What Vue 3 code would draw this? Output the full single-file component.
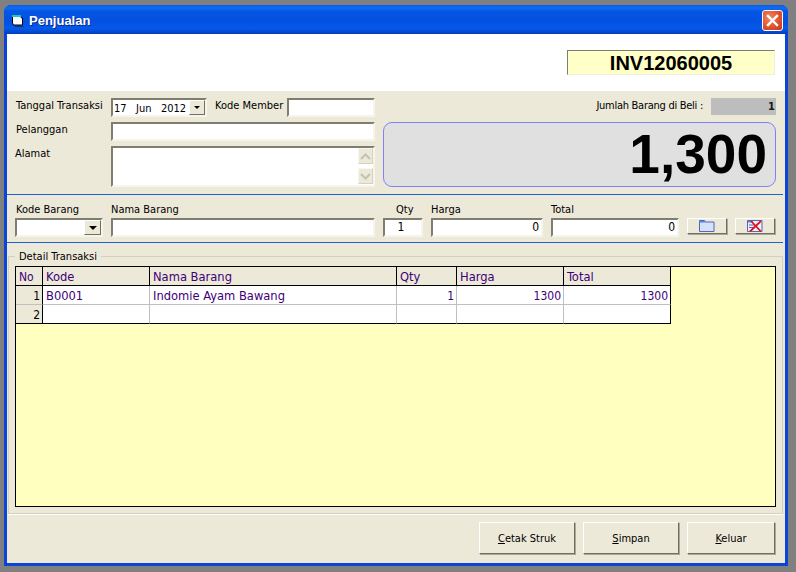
<script setup>
const columns = [
  { name: 'Kode', w: 107 },
  { name: 'Nama Barang', w: 247 },
  { name: 'Qty', w: 60 },
  { name: 'Harga', w: 107 },
  { name: 'Total', w: 107 }
]
const rows = [
  { no: 1, kode: 'B0001', nama: 'Indomie Ayam Bawang', qty: '1', harga: '1300', total: '1300' },
  { no: 2, kode: '', nama: '', qty: '', harga: '', total: '' }
]
</script>

<template>
  <div class="window">
    <header class="titlebar">
      <svg class="app-icon" width="14" height="14" viewBox="0 0 14 14">
        <path d="M1.500 2.500h8l1 1.500h1v7h-9l-1-2z" fill="#fff" stroke="#000"/>
        <path d="M1 2h9" stroke="#1fc7b8" stroke-width="2"/>
        <path d="M4 12h9v1H4z" fill="#16345c"/>
      </svg>
      <span class="title">Penjualan</span>
      <button class="close" aria-label="Tutup">
        <svg width="13" height="13" viewBox="0 0 13 13"><path d="M2 2l9 9M11 2l-9 9" stroke="#fff" stroke-width="2.400" stroke-linecap="square"/></svg>
      </button>
    </header>

    <main class="client">
      <section class="banner">
        <div class="invoice">INV12060005</div>
      </section>

      <section class="summary">
        <div class="customer">
          <div class="row row-first">
            <label class="lbl lbl-wide">Tanggal Transaksi</label>
            <div class="sunken date">
              <span class="date-text">17&nbsp;&nbsp; Jun&nbsp;&nbsp; 2012</span>
              <span class="drop small"><i class="arrow tiny"></i></span>
            </div>
            <label class="lbl lbl-member">Kode Member</label>
            <div class="sunken member"></div>
          </div>
          <div class="row row-second">
            <label class="lbl lbl-wide">Pelanggan</label>
            <div class="sunken grow"></div>
          </div>
          <div class="row row-third">
            <label class="lbl lbl-wide lbl-flush">Alamat</label>
            <div class="sunken grow memo">
              <div class="scroll">
                <span class="scroll-btn"><svg width="11" height="7" viewBox="0 0 11 7"><path d="M1 6l4.500-4.500L10 6" fill="none" stroke="#c4c2b4" stroke-width="2"/></svg></span>
                <span class="scroll-btn"><svg width="11" height="7" viewBox="0 0 11 7"><path d="M1 1l4.500 4.500L10 1" fill="none" stroke="#c4c2b4" stroke-width="2"/></svg></span>
              </div>
            </div>
          </div>
        </div>

        <div class="totals">
          <div class="count">
            <span class="lbl count-lbl">Jumlah Barang di Beli :</span>
            <span class="count-box">1</span>
          </div>
          <div class="grand">1,300</div>
        </div>
      </section>

      <section class="entry">
        <div class="field f-kode">
          <label class="lbl">Kode Barang</label>
          <div class="sunken combo"><span class="drop"><i class="arrow"></i></span></div>
        </div>
        <div class="field f-nama">
          <label class="lbl">Nama Barang</label>
          <div class="sunken"></div>
        </div>
        <div class="field f-qty">
          <label class="lbl">Qty</label>
          <div class="sunken value center">1</div>
        </div>
        <div class="field f-harga">
          <label class="lbl">Harga</label>
          <div class="sunken value">0</div>
        </div>
        <div class="field f-total">
          <label class="lbl">Total</label>
          <div class="sunken value">0</div>
        </div>
        <button class="icon-btn" aria-label="Cari">
          <svg width="16" height="12" viewBox="0 0 16 12">
            <path d="M.5 1.500V.5h5l1 1.500h8.500v9.500H.5z" fill="#d3e2f7" stroke="#5b62b8"/>
            <path d="M1 1h4.500l1 1.500H1z" fill="#3a8cf0"/>
          </svg>
        </button>
        <button class="icon-btn" aria-label="Hapus">
          <svg width="16" height="12" viewBox="0 0 16 12">
            <path d="M.5.500h14.500v11H.5z" fill="#eaf0fa" stroke="#5b62b8"/>
            <path d="M1 1h5v1.500H1z" fill="#3a8cf0"/>
            <path d="M2 5h6M2 7.500h6" stroke="#5b62b8"/>
            <path d="M3 11.500L14 1M4 1l10 10.500" stroke="#e0141a" stroke-width="1.800"/>
          </svg>
        </button>
      </section>

      <section class="group">
        <span class="legend">Detail Transaksi</span>
        <div class="grid">
          <table>
            <thead>
              <tr>
                <th class="no">No</th>
                <th v-for="c in columns" :key="c.name" :style="{ width: c.w + 'px' }">{{ c.name }}</th>
              </tr>
            </thead>
            <tbody>
              <tr v-for="r in rows" :key="r.no">
                <th class="no rowhead">{{ r.no }}</th>
                <td>{{ r.kode }}</td>
                <td>{{ r.nama }}</td>
                <td class="num">{{ r.qty }}</td>
                <td class="num">{{ r.harga }}</td>
                <td class="num">{{ r.total }}</td>
              </tr>
            </tbody>
          </table>
        </div>
      </section>

      <footer class="actions">
        <button class="btn wide"><u>C</u>etak Struk</button>
        <button class="btn wide"><u>S</u>impan</button>
        <button class="btn narrow"><u>K</u>eluar</button>
      </footer>
    </main>
  </div>
</template>

<style>
html, body { margin: 0; background: #808080; }
</style>

<style scoped>
.window {
  width: 784px;
  height: 561px;
  margin: 5px 0 0 4px;
  display: flex;
  flex-direction: column;
  box-sizing: border-box;
  font: 11px "DejaVu Sans Condensed", "DejaVu Sans", sans-serif;
  color: #000;
  background: #0a45d8;
  border-radius: 7px 7px 0 0;
  overflow: hidden;
}
.titlebar {
  height: 29px;
  flex: none;
  display: flex;
  align-items: center;
  padding: 2px 5px 0 7px;
  box-sizing: border-box;
  background: linear-gradient(180deg, #0a5ae6 0%, #0f6cf6 10%, #0556e4 22%, #0450df 55%, #0559ea 80%, #0346cd 95%, #003bb8 100%);
}
.app-icon { flex: none; }
.title {
  margin-left: 4px;
  flex: 1;
  color: #fff;
  font: 700 13px "Liberation Sans", Arial, sans-serif;
  text-shadow: 1px 1px 0 #0a2a8c;
}
.close {
  width: 21px;
  height: 21px;
  padding: 0;
  margin-top: -1px;
  border: 1px solid #fff;
  border-radius: 3px;
  background: radial-gradient(circle at 35% 35%, #ee8a62, #dd4f2a 60%, #c2381a);
  display: flex;
  align-items: center;
  justify-content: center;
}
.client {
  flex: 1;
  margin: 0 3px 3px;
  background: #ece9d8;
  display: flex;
  flex-direction: column;
  min-height: 0;
}
.banner {
  height: 57px;
  flex: none;
  background: #fff;
  display: flex;
  justify-content: flex-end;
  padding: 16px 10px 0 0;
  box-sizing: border-box;
}
.invoice {
  width: 208px;
  height: 25px;
  box-sizing: border-box;
  border: 1px solid;
  border-color: #7f7c70 #f0eee2 #f0eee2 #7f7c70;
  background: #ffffc8;
  font: 700 20px/24px "Liberation Sans", Arial, sans-serif;
  text-align: center;
}
.summary {
  flex: none;
  height: 104px;
  box-sizing: border-box;
  margin-right: 2px;
  padding: 7px 7px 7px 8px;
  display: flex;
  gap: 8px;
  border-bottom: 1px solid #1d62d6;
}
.customer { width: 360px; display: flex; flex-direction: column; gap: 5px; }
.row { display: flex; }
.row-first, .row-second { height: 19px; }
.row-third { height: 41px; }
.lbl { white-space: nowrap; line-height: 14px; padding-top: 1px; box-sizing: border-box; }
.lbl-wide { width: 96px; flex: none; padding-left: 1px; }
.lbl-flush { padding-left: 0; }
.lbl-member { margin-left: 8px; width: 72px; }
.count-lbl { letter-spacing: -0.27px; }
.sunken {
  box-sizing: border-box;
  height: 19px;
  border: 2px solid;
  border-color: #7f7c70 #f6f4eb #f6f4eb #7f7c70;
  background: #fff;
  line-height: 15px;
  position: relative;
}
.grow { flex: 1; }
.date { width: 96px; display: flex; justify-content: space-between; }
.date-text { font-size: 11px; line-height: 17px; padding-left: 1px; white-space: nowrap; }
.member { width: 88px; }
.memo { height: 41px; }
.drop {
  width: 17px;
  height: 15px;
  box-sizing: border-box;
  background: #ece9d8;
  border: 1px solid;
  border-color: #fff #716f64 #716f64 #fff;
  display: flex;
  align-items: center;
  justify-content: center;
}
.drop.small { width: 16px; }
.arrow {
  width: 0;
  height: 0;
  border-left: 4px solid transparent;
  border-right: 4px solid transparent;
  border-top: 4px solid #000;
}
.arrow.tiny { border-left-width: 3px; border-right-width: 3px; border-top-width: 3px; }
.scroll {
  position: absolute;
  right: 0;
  top: 0;
  bottom: 0;
  width: 15px;
  display: flex;
  flex-direction: column;
  justify-content: space-between;
  padding: 0 0 1px;
}
.scroll-btn {
  height: 16px;
  box-sizing: border-box;
  background: #ece9d8;
  border: 1px solid;
  border-color: #f8f7f0 #d4d2c4 #d4d2c4 #f8f7f0;
  display: flex;
  align-items: center;
  justify-content: center;
}
.totals { width: 393px; display: flex; flex-direction: column; }
.count { height: 24px; display: flex; justify-content: flex-end; gap: 8px; }
.count-box {
  width: 65px;
  height: 17px;
  background: #bdbdbd;
  text-align: right;
  padding-right: 1px;
  box-sizing: border-box;
  line-height: 17px;
  color: #1a1a1a;
  font-weight: 700;
}
.grand {
  height: 65px;
  box-sizing: border-box;
  border: 1px solid #8080ff;
  border-radius: 9px;
  background: #e0e0e0;
  font: 700 55px/62px "Liberation Sans", Arial, sans-serif;
  text-align: right;
  padding-right: 8px;
}
.entry {
  flex: none;
  height: 48px;
  box-sizing: border-box;
  margin-right: 2px;
  padding: 7px 7px 0 8px;
  display: flex;
  gap: 8px;
  border-bottom: 1px solid #1d62d6;
}
.field { display: flex; flex-direction: column; gap: 1px; }
.f-kode { width: 88px; }
.f-kode .lbl { padding-left: 1px; }
.f-nama { width: 264px; }
.f-qty { width: 40px; }
.f-qty .lbl { margin-left: 13px; }
.f-harga { width: 112px; }
.f-total { width: 128px; }
.combo { display: flex; justify-content: flex-end; }
.value { text-align: right; padding-right: 2px; font-size: 12px; }
.center { text-align: center; padding: 0 4px 0 0; }
.icon-btn {
  width: 40px;
  height: 16px;
  margin: 16px 0 0;
  padding: 0;
  box-sizing: border-box;
  background: #ece9d8;
  border: 1px solid;
  border-color: #fff #716f64 #716f64 #fff;
  box-shadow: 1px 1px 0 #aca899;
  display: flex;
  align-items: center;
  justify-content: center;
}
.group {
  flex: none;
  height: 258px;
  margin: 13px 2px 0 1px;
  box-sizing: border-box;
  border: 1px solid #d0d0bf;
  box-shadow: 0 1px 0 #fff;
  padding: 9px 6px 6px;
  position: relative;
}
.legend {
  position: absolute;
  left: 6px;
  top: -7px;
  padding: 0 4px;
  background: #ece9d8;
  line-height: 14px;
}
.grid {
  height: 100%;
  box-sizing: border-box;
  border: 1px solid #000;
  background: #ffffc0;
}
table {
  border-collapse: separate;
  border-spacing: 0;
  table-layout: fixed;
  width: 655px;
  font-size: 12.8px;
  color: #40007a;
}
th, td {
  box-sizing: border-box;
  height: 19px;
  padding: 1px 2px 0 3px;
  font-weight: 400;
  text-align: left;
  white-space: nowrap;
  overflow: hidden;
}
thead th {
  background: #ece9d8;
  border-right: 1px solid #000;
  border-bottom: 1px solid #000;
}
th:last-child, td:last-child { border-right: 1px solid #000; }
td {
  background: #fff;
  border-right: 1px solid #c0c0c0;
  border-bottom: 1px solid #c0c0c0;
}
tbody tr:last-child td, tbody tr:last-child th { border-bottom-color: #000; }
.no { width: 27px; font-size: 12px; }
.rowhead {
  background: #ece9d8;
  color: #000;
  text-align: right;
  border-right: 1px solid #000;
  border-bottom: 1px solid #c0c0c0;
}
.num { text-align: right; font-size: 12px; }
.actions {
  flex: 1;
  display: flex;
  justify-content: flex-end;
  gap: 8px;
  padding: 8px 10px 0 0;
  box-sizing: border-box;
}
.btn {
  height: 32px;
  padding: 0;
  box-sizing: border-box;
  background: #ece9d8;
  border: 1px solid;
  border-color: #fff #716f64 #716f64 #fff;
  box-shadow: 1px 1px 0 #aca899;
  font: inherit;
  color: #000;
}
.wide { width: 96px; }
.narrow { width: 88px; }
</style>
